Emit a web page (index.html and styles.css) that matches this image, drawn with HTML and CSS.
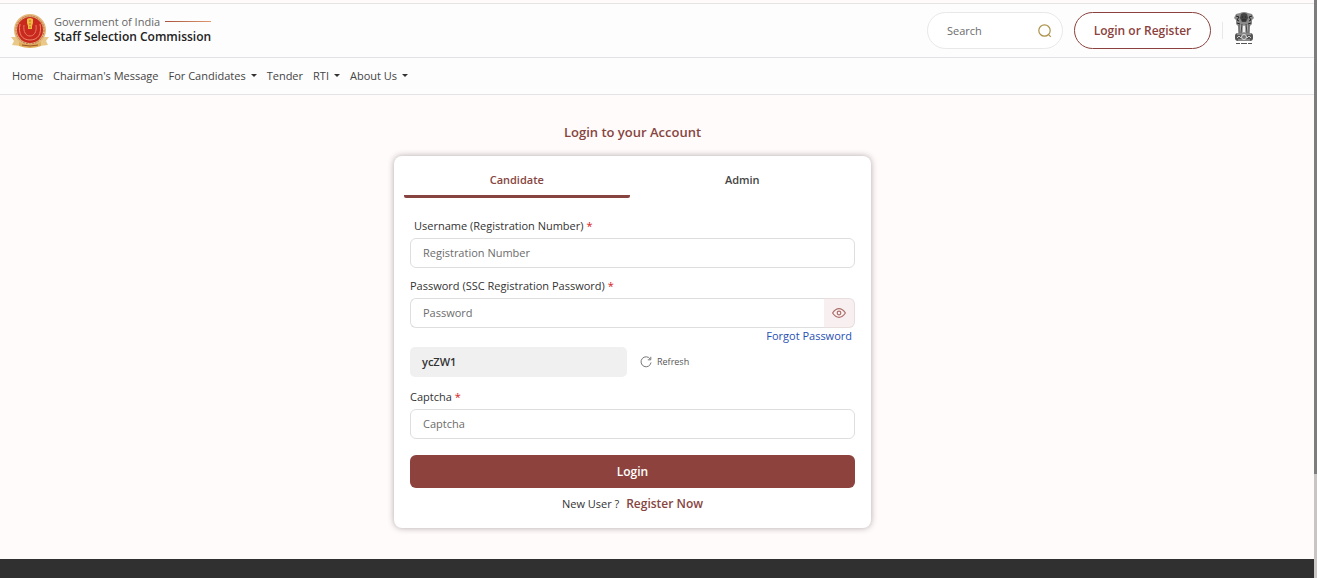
FILE: index.html
```html
<!DOCTYPE html>
<html lang="en">
<head>
  <meta charset="UTF-8" />
  <meta name="viewport" content="width=device-width, initial-scale=1" />
  <title>Login | Staff Selection Commission</title>
  <link rel="stylesheet" href="styles.css">
</head>
<body>
  <header class="header">
    <a class="brand" href="#">
      <svg class="brand-logo" viewBox="0 0 38 34" aria-hidden="true">
        <path d="M0 23h8l3 5-2 4-8-1 2-4z" fill="#e8c98a"/>
        <path d="M38 23h-8l-3 5 2 4 8-1-2-4z" fill="#e8c98a"/>
        <circle cx="19" cy="16" r="16" fill="#e3b878"/>
        <circle cx="19" cy="16" r="14" fill="none" stroke="#c0694a" stroke-width="1" stroke-dasharray="2 1"/>
        <circle cx="19" cy="16" r="13" fill="#c9281f"/>
        <path d="M9 10c-2 10 2 16 10 16s12-6 10-16" fill="none" stroke="#ed8a68" stroke-width="1"/>
        <path d="M13 11c-1 7 2 11 6 11s7-4 6-11" fill="none" stroke="#e87d5d" stroke-width="1"/>
        <path d="M16 5q3-2 6 0v4l-1 3v3h-4v-3l-1-3z" fill="#efb944"/>
        <path d="M18 7h2M18 10h2M18 13h2" stroke="#b8701f" stroke-width="1"/>
        <path d="M8 28q11 5 22 0v4q-11 4-22 0z" fill="#dfac58"/>
        <path d="M11 31q8 2 16 0" fill="none" stroke="#9c5026" stroke-width="1"/>
      </svg>
      <span class="brand-text">
        <span class="brand-gov">Government of India</span>
        <span class="brand-name">Staff Selection Commission</span>
      </span>
    </a>
    <div class="header-actions">
      <form class="search" role="search">
        <input type="search" placeholder="Search" aria-label="Search" />
        <button type="submit" aria-label="Search">
          <svg viewBox="0 0 14 14"><circle cx="6.5" cy="6.5" r="5.7"/><path d="M10.8 10.8l2 2"/></svg>
        </button>
      </form>
      <button class="btn-outline" type="button">Login or Register</button>
      <span class="divider"></span>
      <svg class="emblem" viewBox="0 0 20 34" role="img" aria-label="National emblem">
        <path d="M6 1q4-2 8 0l4 1 2 4-2 2v4l-2 2H4l-2-2V8L0 6l2-4z" fill="#8a8a8a"/>
        <path d="M7 2q3-2 6 0l1 4-2 4H8L6 6z" fill="#444"/>
        <path d="M2 4l3 1-2 3 2 1M18 4l-3 1 2 3-2 1M8 5h1M11 5h1M8 8h4M3 11l3 1M17 11l-3 1" fill="none" stroke="#222" stroke-width="1"/>
        <path d="M4 13h12l-1 8H5z" fill="#a5a5a5"/>
        <path d="M5 13v8M8 12l-1 9M12 12l1 9M15 13v8" fill="none" stroke="#444" stroke-width="1"/>
        <path d="M10 14v6" stroke="#eee" stroke-width="2"/>
        <rect x="1" y="21" width="18" height="8" rx="3" fill="#555"/>
        <path d="M3 22h14M4 28h12" stroke="#bbb" stroke-width="1"/>
        <circle cx="10" cy="25" r="2.500" fill="#777" stroke="#ddd" stroke-width="1"/>
        <path d="M3 26l2-2 2 2M17 26l-2-2-2 2" fill="none" stroke="#ccc" stroke-width="1"/>
        <path d="M2 31.500h16" stroke="#555" stroke-width="1" stroke-dasharray="4 1 6 1"/>
      </svg>
    </div>
  </header>

  <nav class="nav">
    <a href="#">Home</a>
    <a href="#">Chairman's Message</a>
    <a class="has-menu" href="#">For Candidates</a>
    <a href="#">Tender</a>
    <a class="has-menu" href="#">RTI</a>
    <a class="has-menu" href="#">About Us</a>
  </nav>

  <main class="main">
    <h1>Login to your Account</h1>
    <section class="card">
      <div class="tabs" role="tablist">
        <button class="tab active" type="button" role="tab" aria-selected="true">Candidate</button>
        <button class="tab" type="button" role="tab" aria-selected="false">Admin</button>
      </div>

      <form class="login-form">
        <label class="label-inset" for="username">Username (Registration Number) <span class="required">*</span></label>
        <input class="field" type="text" id="username" placeholder="Registration Number" />

        <label for="password">Password (SSC Registration Password) <span class="required">*</span></label>
        <div class="password-group">
          <input class="field" type="password" id="password" placeholder="Password" />
          <button class="toggle-password" type="button" aria-label="Show password">
            <svg viewBox="0 0 14 10"><path d="M.6 5Q3.5.7 7 .7T13.4 5Q10.500 9.300 7 9.300T.6 5z"/><circle cx="7" cy="5" r="1.800"/></svg>
          </button>
        </div>
        <a class="forgot" href="#">Forgot Password</a>

        <div class="captcha-row">
          <output class="captcha-code">ycZW1</output>
          <button class="refresh" type="button">
            <svg viewBox="0 0 12 12"><path d="M10.200 3A5 5 0 1 0 11 6.500M10.800.8v3h-3"/></svg>
            Refresh
          </button>
        </div>

        <label for="captcha">Captcha <span class="required">*</span></label>
        <input class="field" type="text" id="captcha" placeholder="Captcha" />

        <button class="btn-login" type="submit">Login</button>
        <p class="register">New User ? <a href="#">Register Now</a></p>
      </form>
    </section>
  </main>

  <footer class="footer"></footer>

  <div class="scroll-track"><div class="scroll-thumb"></div></div>
</body>
</html>
```

FILE: styles.css
```css
* {
  box-sizing: border-box;
}
body {
  font-family: "Open Sans", "Noto Sans", sans-serif;
  font-size: 11px;
  line-height: 16px;
  color: #333;
  background: #fffbfa;
  display: flex;
  flex-direction: column;
  min-height: 100vh;
  margin: 0;
  padding-top: 3px;
}
button,
input {
  font-family: inherit;
  font-size: inherit;
  line-height: inherit;
  margin: 0;
}
button {
  cursor: pointer;
}
a {
  text-decoration: none;
}
svg {
  display: block;
}

/* Header */
.header {
  display: flex;
  align-items: center;
  justify-content: space-between;
  height: 55px;
  padding: 0 63px 0 11px;
  background: #fdfdfd;
  border-top: 1px solid #e6e3e3;
  border-bottom: 1px solid #e2e2e6;
}
.brand {
  display: flex;
  align-items: center;
  gap: 5px;
}
.brand-logo {
  width: 38px;
  height: 34px;
}
.brand-text {
  display: flex;
  flex-direction: column;
  padding-bottom: 2px;
}
.brand-gov {
  display: flex;
  align-items: center;
  gap: 5px;
  line-height: 14px;
  color: #666;
}
.brand-gov::after {
  content: "";
  flex: 1;
  height: 1px;
  background: linear-gradient(to right, #a8503f, #dd9a70);
}
.brand-name {
  font-size: 12px;
  font-weight: 600;
  color: #222;
}
.header-actions {
  display: flex;
  align-items: center;
  gap: 11px;
}
.search {
  display: flex;
  align-items: center;
  width: 136px;
  height: 37px;
  padding: 0 10px 0 19px;
  background: #fff;
  border: 1px solid #e8e8e8;
  border-radius: 20px;
}
.search input {
  flex: 1;
  min-width: 0;
  padding: 0;
  border: none;
  outline: none;
  background: none;
}
.search button {
  padding: 0;
  border: none;
  background: none;
}
.search svg {
  width: 14px;
  height: 14px;
  fill: none;
  stroke: #ad924c;
  stroke-width: 1.2;
}
::placeholder {
  color: #6c6c6c;
  opacity: 1;
}
.btn-outline {
  width: 137px;
  height: 37px;
  padding: 0;
  font-size: 12px;
  font-weight: 600;
  color: #8b413d;
  background: #fff;
  border: 1px solid #8b413d;
  border-radius: 20px;
}
.divider {
  width: 1px;
  height: 17px;
  background: #e8e8e8;
}
.emblem {
  width: 20px;
  height: 34px;
  margin-bottom: 3px;
}

/* Navigation */
.nav {
  display: flex;
  align-items: center;
  gap: 10px;
  height: 37px;
  padding: 0 12px;
  background: #fdfdfd;
  border-bottom: 1px solid #e4e4e6;
}
.nav a {
  color: #444;
}
.has-menu::after {
  content: "";
  display: inline-block;
  margin-left: 5px;
  vertical-align: 3px;
  border-top: 3px solid #333;
  border-left: 3px solid transparent;
  border-right: 3px solid transparent;
}

/* Login card */
.main {
  flex: 1;
  padding: 27px 52px 30px 0;
}
h1 {
  margin: 0 0 13px;
  font-size: 13px;
  line-height: 21px;
  font-weight: 600;
  text-align: center;
  color: #874541;
}
.card {
  max-width: 477px;
  margin: 0 auto;
  padding-bottom: 16px;
  background: #fff;
  border-radius: 8px;
  box-shadow: 0 0 6px rgba(60, 50, 50, 0.4);
}
.tabs {
  display: flex;
  padding: 8px 16px 0 10px;
}
.tab {
  flex: 1;
  height: 34px;
  padding: 0;
  font-weight: 600;
  color: #444;
  background: none;
  border: none;
  border-bottom: 3px solid transparent;
  border-radius: 2px;
}
.tab.active {
  color: #874541;
  border-bottom-color: #87433f;
}
.login-form {
  display: flex;
  flex-direction: column;
  padding: 20px 16px 0;
}
.login-form label {
  margin-bottom: 4px;
}
.label-inset {
  padding-left: 4px;
}
.required {
  color: #d71920;
}
.field {
  width: 100%;
  height: 30px;
  padding: 0 12px 1px;
  background: #fff;
  border: 1px solid #dedede;
  border-radius: 6px;
}
.label-inset + .field {
  margin-bottom: 10px;
}
.password-group {
  display: flex;
}
.password-group .field {
  border-right: none;
  border-radius: 6px 0 0 6px;
}
.toggle-password {
  display: flex;
  align-items: center;
  justify-content: center;
  flex: 0 0 31px;
  padding: 0;
  background: #f8eff0;
  border: 1px solid #e8dede;
  border-left: none;
  border-radius: 0 6px 6px 0;
}
.toggle-password svg {
  width: 14px;
  height: 10px;
  fill: none;
  stroke: #ad706b;
  stroke-width: 1.2;
}
.forgot {
  align-self: flex-end;
  margin: 0 3px 3px 0;
  color: #2850b5;
}
.captcha-row {
  display: flex;
  align-items: center;
  gap: 13px;
  margin-bottom: 12px;
}
.captcha-code {
  width: 217px;
  padding: 7px 12px;
  font-weight: 600;
  background: #f0f0f1;
  border-radius: 5px;
}
.refresh {
  display: flex;
  align-items: center;
  gap: 5px;
  padding: 0;
  font-size: 9px;
  color: #555;
  background: none;
  border: none;
}
.refresh svg {
  width: 12px;
  height: 12px;
  fill: none;
  stroke: #777;
}
.btn-login {
  height: 33px;
  margin-top: 16px;
  font-size: 12px;
  font-weight: 600;
  color: #fff;
  background: #8d423d;
  border: none;
  border-radius: 6px;
}
.register {
  margin: 8px 0 0;
  text-align: center;
}
.register a {
  margin-left: 4px;
  font-size: 12px;
  font-weight: 600;
  color: #874541;
}

.footer {
  height: 19px;
  background: #303030;
}

/* Slim scrollbar along the window edge */
.scroll-track {
  position: fixed;
  top: 0;
  right: 0;
  bottom: 0;
  width: 3px;
  background: #c9c5c5;
}
.scroll-thumb {
  height: 82%;
  background: #7d7d7d;
}
```
